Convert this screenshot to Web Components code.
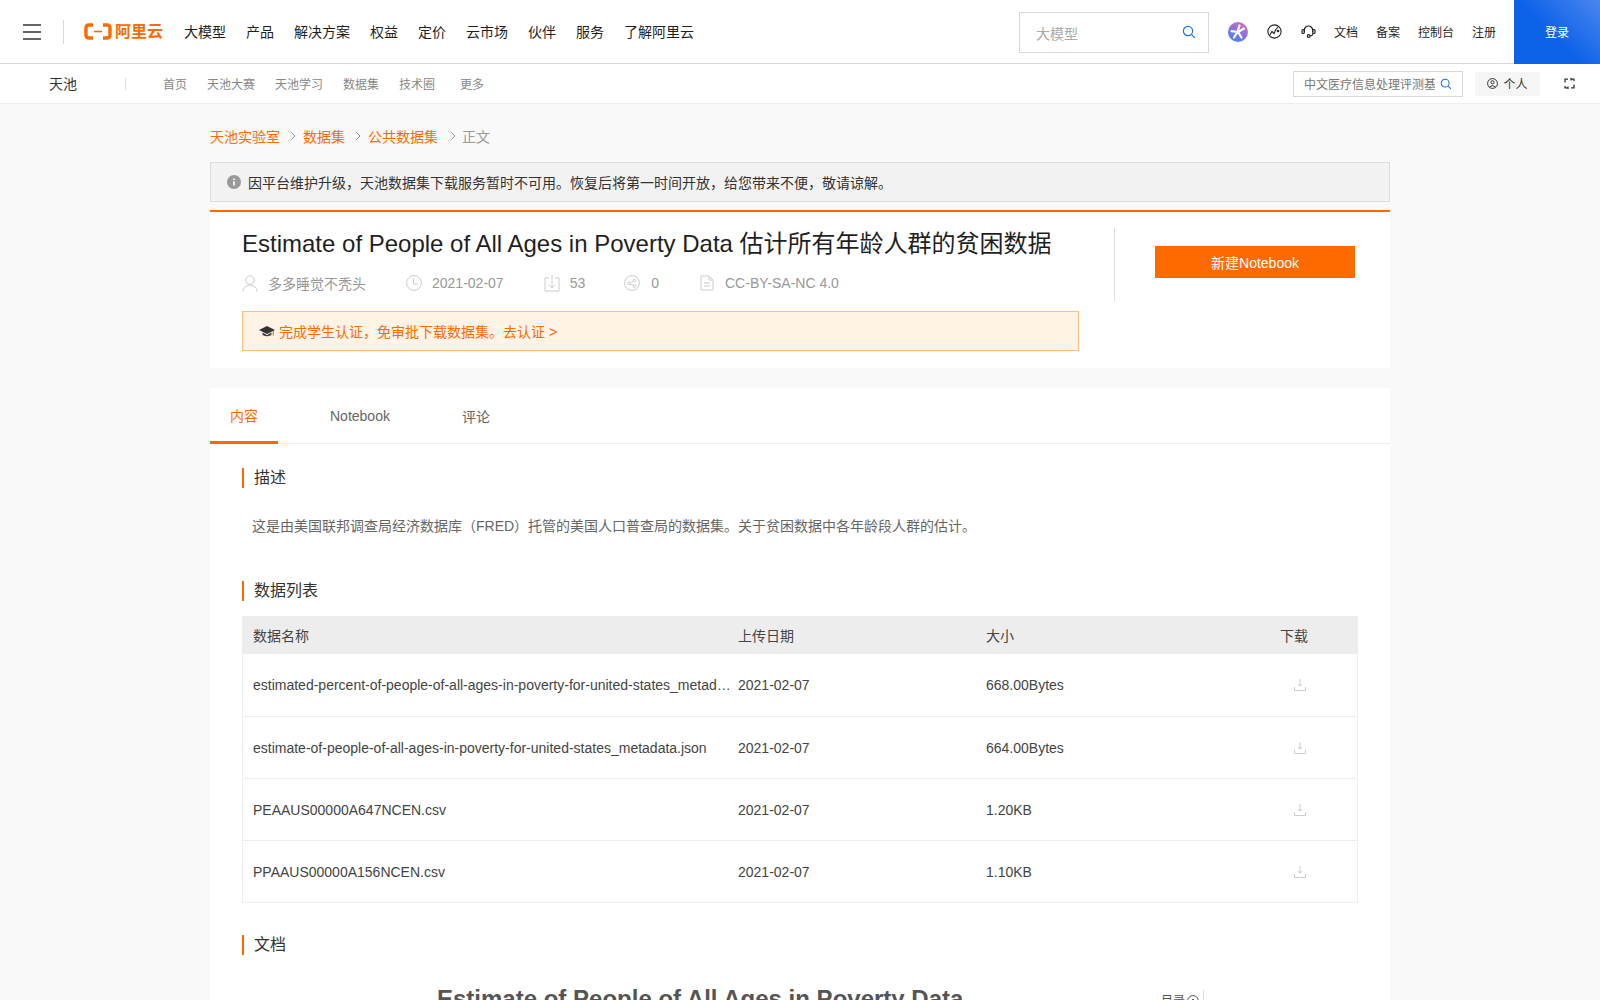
<!doctype html>
<html lang="zh">
<head>
<meta charset="UTF-8">
<title>Estimate of People of All Ages in Poverty Data</title>
<style>
    html, body { margin: 0; height: 1000px; overflow: hidden; }
    body {
        background: #f9f9f9;
        font-family: "Liberation Sans", "Noto Sans CJK SC", sans-serif;
        font-size: 14px;
        color: #333;
        text-spacing-trim: space-all;
    }
    main-column { margin: 0 auto; }
</style>
</head>
<body>
<top-bar></top-bar>
<sub-bar></sub-bar>
<main-column>
    <bread-crumb></bread-crumb>
    <notice-bar>因平台维护升级，天池数据集下载服务暂时不可用。恢复后将第一时间开放，给您带来不便，敬请谅解。</notice-bar>
    <dataset-head></dataset-head>
    <content-card>
        <tab-strip></tab-strip>
        <section-block heading="描述">
            <p style="margin:0;padding:0 0 0 10px;color:#666;font-size:14px;line-height:20px">这是由美国联邦调查局经济数据库（FRED）托管的美国人口普查局的数据集。关于贫困数据中各年龄段人群的估计。</p>
        </section-block>
        <file-table></file-table>
        <doc-view></doc-view>
    </content-card>
</main-column>
<script>
    const searchIcon = (size, color) => `<svg width="${size}" height="${size}" viewBox="0 0 14 14" fill="none" stroke="${color}" stroke-width="1.2"><circle cx="6" cy="6" r="4.6"/><path d="M9.4 9.4L12.8 12.8"/></svg>`;

    class TopBar extends HTMLElement {
        constructor() {
            super();
            const shadowRoot = this.attachShadow({mode: 'open'});
            const nav = ['大模型', '产品', '解决方案', '权益', '定价', '云市场', '伙伴', '服务', '了解阿里云'];
            shadowRoot.innerHTML = `
            <style>
                :host { display: flex; align-items: center; height: 63px; background: #fff; border-bottom: 1px solid #d9d9d9; color: #1f1f1f; }
                .burger { display: flex; flex-direction: column; justify-content: space-between; width: 18px; height: 16px; margin-left: 23px; }
                .burger i { display: block; height: 2px; background: #666; }
                .line { width: 1px; height: 24px; background: #d9d9d9; margin: 0 20px 0 22px; }
                .logo { display: flex; align-items: center; gap: 3px; color: #ff6a00; font-size: 16px; font-weight: 700; line-height: 18px; margin-right: 21px; }
                nav { display: flex; gap: 20px; font-size: 14px; padding-bottom: 2px; }
                .search { display: flex; align-items: center; justify-content: space-between; box-sizing: border-box; width: 190px; height: 41px; margin: 2px 0 0 auto; padding: 0 12px 0 16px; border: 1px solid #d9d9d9; color: #aaa; font-size: 14px; }
                .search svg { margin-top: -2px; }
                .tools { display: flex; align-items: center; font-size: 12px; margin-left: 19px; }
                .tools svg { display: block; }
                .login { display: flex; align-items: center; justify-content: center; box-sizing: border-box; width: 86px; height: 64px; padding-bottom: 2px; margin-bottom: -1px; margin-left: 18px; color: #fff; font-size: 12px; background: linear-gradient(45deg, #0e62e8 45%, #4a86ee); }
            </style>
            <div class="burger"><i></i><i></i><i></i></div>
            <div class="line"></div>
            <div class="logo">
                <svg width="28" height="17" viewBox="0 0 28 17" fill="none" stroke="#ff6a00"><path d="M9 2H5Q2 2 2 5V12Q2 15 5 15H9" stroke-width="3.4"/><path d="M19 2H23Q26 2 26 5V12Q26 15 23 15H19" stroke-width="3.4"/><path d="M10 8.5H18" stroke-width="1.6"/></svg>
                <span>阿里云</span>
            </div>
            <nav>${nav.map(n => `<span>${n}</span>`).join('')}</nav>
            <div class="search"><span>大模型</span>${searchIcon(14, '#1a6ff0')}</div>
            <div class="tools">
                <svg width="20" height="20" viewBox="0 0 20 20" style="margin-right:19px">
                    <defs><linearGradient id="ai" x1="0.8" y1="0" x2="0.2" y2="1"><stop offset="0" stop-color="#d66fb8"/><stop offset="0.5" stop-color="#8a70e0"/><stop offset="1" stop-color="#3f86f2"/></linearGradient></defs>
                    <circle cx="10" cy="10" r="10" fill="url(#ai)"/>
                    <path d="M11.5 3.5L9.8 9M3.5 9.2L9.5 10M9.5 10L6 15.5M10 10L13.5 15.5M10 10L16 6.5" stroke="#fff" stroke-width="2.2" stroke-linecap="round"/>
                </svg>
                <svg width="15" height="15" viewBox="0 0 15 15" fill="none" stroke="#222" stroke-width="1.1" style="margin-right:19px"><circle cx="7.5" cy="7.5" r="6.6"/><path d="M2.5 11.5L5 7.5L7 9.5L8.5 6L11 3"/><circle cx="11" cy="7" r="0.8"/></svg>
                <svg width="15" height="15" viewBox="0 0 15 15" fill="none" stroke="#222" stroke-width="1.2" style="margin-right:18px"><path d="M3.3 8V6.2a4.2 4.2 0 0 1 8.4 0V8"/><rect x="1" y="5.5" width="2.3" height="4" rx="1"/><rect x="11.7" y="5.5" width="2.3" height="4" rx="1"/><path d="M12 9.5Q11.5 12 9 12"/><circle cx="7.7" cy="12" r="1.4"/></svg>
                <span style="margin-right:18px">文档</span>
                <span style="margin-right:18px">备案</span>
                <span style="margin-right:18px">控制台</span>
                <span>注册</span>
            </div>
            <div class="login">登录</div>`;
        }
    }

    class SubBar extends HTMLElement {
        constructor() {
            super();
            const shadowRoot = this.attachShadow({mode: 'open'});
            shadowRoot.innerHTML = `
            <style>
                :host { display: flex; align-items: center; height: 39px; background: #fff; border-bottom: 1px solid #eee; }
                .name { margin-left: 49px; padding-bottom: 2px; font-size: 14px; color: #333; }
                .line { width: 1px; height: 12px; background: #ddd; margin: 0 37px 0 48px; }
                nav { display: flex; gap: 20px; font-size: 12px; color: #888; }
                .search { display: flex; align-items: center; box-sizing: border-box; width: 170px; height: 26px; margin-left: auto; padding: 0 10px; gap: 5px; border: 1px solid #d9d9d9; font-size: 12px; color: #777; white-space: nowrap; }
                .search span { overflow: hidden; flex: 1; }
                .mine { display: flex; align-items: center; justify-content: center; gap: 5px; width: 65px; height: 24px; margin-left: 12px; background: #f5f5f5; font-size: 12px; color: #333; }
                .swap { margin: 0 25px 0 24px; display: block; }
            </style>
            <span class="name">天池</span>
            <span class="line"></span>
            <nav><span>首页</span><span>天池大赛</span><span>天池学习</span><span>数据集</span><span>技术圈</span><span style="margin-left:5px">更多</span></nav>
            <div class="search"><span>中文医疗信息处理评测基准</span>${searchIcon(12, '#1a6ff0')}</div>
            <div class="mine">
                <svg width="11" height="11" viewBox="0 0 11 11" fill="none" stroke="#333"><circle cx="5.5" cy="5.5" r="4.9"/><circle cx="5.5" cy="4.3" r="1.6"/><path d="M2.6 9Q5.5 6 8.4 9"/></svg>
                <span>个人</span>
            </div>
            <svg class="swap" width="11" height="11" viewBox="0 0 11 11" fill="none" stroke="#333" stroke-width="1.3"><path d="M1 4.5V1.2H4M7.5 1.2H10V3M7 0V2.6"/><path d="M10 6.5V9.8H7M3.5 9.8H1V8M4 8.4V11"/></svg>`;
        }
    }

    class MainColumn extends HTMLElement {
        constructor() {
            super();
            const shadowRoot = this.attachShadow({mode: 'open'});
            shadowRoot.innerHTML = `<style>:host { display: block; width: 1180px; }</style><slot></slot>`;
        }
    }

    class BreadCrumb extends HTMLElement {
        constructor() {
            super();
            const shadowRoot = this.attachShadow({mode: 'open'});
            const arrow = (style = '') => `<svg style="${style}" width="6" height="10" viewBox="0 0 6 10" fill="none" stroke="#999"><path d="M1 1L5 5L1 9"/></svg>`;
            shadowRoot.innerHTML = `
            <style>
                :host { display: flex; align-items: center; box-sizing: border-box; height: 58px; padding-top: 5px; font-size: 14px; color: #ff6a00; }
                svg { margin: 1px 7px 0 10px; }
                .now { color: #999; margin-left: 1px; }
            </style>
            <span>天池实验室</span>${arrow()}<span>数据集</span>${arrow()}<span>公共数据集</span>${arrow('margin-left:12px;margin-right:5px')}<span class="now">正文</span>`;
        }
    }

    class NoticeBar extends HTMLElement {
        constructor() {
            super();
            const shadowRoot = this.attachShadow({mode: 'open'});
            shadowRoot.innerHTML = `
            <style>
                :host { display: flex; align-items: center; gap: 7px; box-sizing: border-box; height: 40px; padding-left: 16px; background: #f2f2f2; border: 1px solid #ddd; font-size: 14px; color: #333; }
            </style>
            <svg width="14" height="14" viewBox="0 0 14 14"><circle cx="7" cy="7" r="7" fill="#999"/><path d="M7 3.4V5M7 6.2V10.6" stroke="#fff" stroke-width="1.6"/></svg>
            <slot></slot>`;
        }
    }

    class DatasetHead extends HTMLElement {
        constructor() {
            super();
            const shadowRoot = this.attachShadow({mode: 'open'});
            const g = 'fill="none" stroke="#ccc" stroke-width="1"';
            shadowRoot.innerHTML = `
            <style>
                :host { display: flex; box-sizing: border-box; height: 158px; margin-top: 8px; padding-left: 32px; background: #fff; border-top: 2px solid #ff6a00; }
                .left { width: 837px; }
                h1 { margin: 16px 0 0; font-size: 24px; font-weight: 400; line-height: 32px; color: #1f1f1f; white-space: nowrap; }
                .meta { display: flex; align-items: center; gap: 40px; height: 20px; margin-top: 13px; font-size: 14px; color: #999; }
                .meta div { display: flex; align-items: center; gap: 10px; }
                .meta svg { display: block; }
                .student { display: flex; align-items: center; gap: 4px; box-sizing: border-box; height: 40px; margin-top: 18px; padding-left: 16px; background: #fff3e6; border: 1px solid #ffbf80; color: #ff6a00; font-size: 14px; }
                .right { display: flex; box-sizing: border-box; height: 73px; margin: 16px 0 0 35px; padding: 18px 0 0 40px; border-left: 1px solid #ddd; }
                .btn { display: flex; align-items: center; justify-content: center; width: 200px; height: 32px; background: #ff6a00; color: #fff; font-size: 14px; }
            </style>
            <div class="left">
                <h1>Estimate of People of All Ages in Poverty Data 估计所有年龄人群的贫困数据</h1>
                <div class="meta">
                    <div><svg width="16" height="18" viewBox="0 0 16 18" ${g}><circle cx="8" cy="6" r="4.2"/><path d="M0.8 17.5Q2 11 8 11Q14 11 15.2 17.5"/></svg><span>多多睡觉不秃头</span></div>
                    <div><svg width="16" height="16" viewBox="0 0 16 16" ${g}><circle cx="8" cy="8" r="7.4"/><path d="M7.5 3.5V9H12"/></svg><span>2021-02-07</span></div>
                    <div style="margin-right:-1px"><svg width="16" height="18" viewBox="0 0 16 18" ${g}><path d="M5 4H1V17H15V4H11"/><path d="M8 1V14M4.5 10.5L8 14L11.5 10.5"/></svg><span>53</span></div>
                    <div style="gap:11px"><svg width="16" height="16" viewBox="0 0 16 16" ${g}><circle cx="8" cy="8" r="7.4"/><circle cx="5" cy="8.5" r="1.4"/><circle cx="10.5" cy="5.5" r="1.4"/><circle cx="10.5" cy="11" r="1.4"/><path d="M6.2 7.8L9.3 6.2M6.2 9.2L9.3 10.4"/></svg><span>0</span></div>
                    <div style="margin-left:1px;gap:11px"><svg width="14" height="16" viewBox="0 0 14 16" ${g}><path d="M1 1H9L13 5V15H1Z"/><path d="M9 1V5H13M4 8H10M4 11H10"/></svg><span>CC-BY-SA-NC 4.0</span></div>
                </div>
                <div class="student">
                    <svg width="16" height="16" viewBox="0 0 16 16"><path d="M8 3L16 7L8 11L0 7Z" fill="#333"/><path d="M3.5 9.5V12Q8 14.5 12.5 12V9.5L8 12Z" fill="#444"/><path d="M14.3 8V12.5" stroke="#c98a1a" stroke-width="1.2"/></svg>
                    <span>完成学生认证，免审批下载数据集。去认证 &gt;</span>
                </div>
            </div>
            <div class="right"><div class="btn">新建Notebook</div></div>`;
        }
    }

    class ContentCard extends HTMLElement {
        constructor() {
            super();
            const shadowRoot = this.attachShadow({mode: 'open'});
            shadowRoot.innerHTML = `<style>:host { display: block; height: 640px; margin-top: 20px; background: #fff; overflow: hidden; }</style><slot></slot>`;
        }
    }

    class TabStrip extends HTMLElement {
        constructor() {
            super();
            const shadowRoot = this.attachShadow({mode: 'open'});
            shadowRoot.innerHTML = `
            <style>
                :host { display: flex; height: 56px; border-bottom: 1px solid #eee; box-sizing: border-box; font-size: 14px; color: #666; }
                span { display: flex; align-items: center; justify-content: center; box-sizing: border-box; height: 56px; padding: 0 20px; margin-right: 32px; }
                span:last-child { margin-right: 0; }
                .on { color: #ff6a00; border-bottom: 3px solid #ff6a00; }
            </style>
            <span class="on">内容</span><span>Notebook</span><span>评论</span>`;
        }
    }

    class SectionBlock extends HTMLElement {
        constructor() {
            super();
            const shadowRoot = this.attachShadow({mode: 'open'});
            shadowRoot.innerHTML = `
            <style>
                :host { display: block; padding: 24px 32px 0; }
                h3 { margin: 0 0 28px; padding-left: 10px; border-left: 2px solid #ff6a00; font-size: 16px; font-weight: 400; line-height: 20px; height: 20px; color: #333; }
            </style>
            <h3>${this.getAttribute('heading')}</h3>
            <slot></slot>`;
        }
    }

    class FileTable extends HTMLElement {
        constructor() {
            super();
            const shadowRoot = this.attachShadow({mode: 'open'});
            const rows = [
                ['estimated-percent-of-people-of-all-ages-in-poverty-for-united-states_metadata.json', '668.00Bytes'],
                ['estimate-of-people-of-all-ages-in-poverty-for-united-states_metadata.json', '664.00Bytes'],
                ['PEAAUS00000A647NCEN.csv', '1.20KB'],
                ['PPAAUS00000A156NCEN.csv', '1.10KB']
            ];
            const icon = `<svg width="14" height="14" viewBox="0 0 14 14" fill="none" stroke="#ccc"><path d="M7 1V8M4.8 6L7 8.2L9.2 6" /><path d="M1.5 9V12.5H12.5V9"/></svg>`;
            shadowRoot.innerHTML = `
            <style>
                :host { display: block; padding: 45px 32px 0; }
                h3 { margin: 0 0 15px; padding-left: 10px; border-left: 2px solid #ff6a00; font-size: 16px; font-weight: 400; line-height: 20px; height: 20px; color: #333; }
                .table { border: 1px solid #eee; border-top: 0; }
                .row { display: grid; grid-template-columns: 485px 248px 256px 1fr; align-items: center; box-sizing: border-box; height: 62px; padding-left: 10px; border-top: 1px solid #eee; font-size: 14px; color: #444; }
                .row:first-child { height: 38px; background: #ededed; border-top: 0; margin: 0 -1px; padding-left: 11px; color: #444; }
                .row:nth-child(2) { border-top: 0; }
                .row .name { overflow: hidden; text-overflow: ellipsis; white-space: nowrap; padding-right: 6px; }
                .dl { display: flex; justify-content: flex-start; margin-left: 51px; }
                .dl svg { display: block; }
                .hd { margin-left: 38px; }
            </style>
            <h3>数据列表</h3>
            <div class="table">
                <div class="row"><span>数据名称</span><span>上传日期</span><span>大小</span><span class="hd">下载</span></div>
                ${rows.map(r => `<div class="row"><span class="name">${r[0]}</span><span>2021-02-07</span><span>${r[1]}</span><span class="dl">${icon}</span></div>`).join('')}
            </div>`;
        }
    }

    class DocView extends HTMLElement {
        constructor() {
            super();
            const shadowRoot = this.attachShadow({mode: 'open'});
            shadowRoot.innerHTML = `
            <style>
                :host { display: block; padding: 32px 32px 0; }
                h3 { margin: 0; padding-left: 10px; border-left: 2px solid #ff6a00; font-size: 16px; font-weight: 400; line-height: 20px; height: 20px; color: #333; }
                .doc { display: flex; margin-top: 28px; }
                h1 { margin: 0 0 0 195px; font-size: 24px; font-weight: 700; line-height: 32px; color: #555; white-space: nowrap; }
                .toc { display: flex; align-items: flex-start; gap: 2px; align-self: flex-start; box-sizing: border-box; height: 28px; margin: 7px 154px 0 auto; padding: 4px 4px 0 0; border-right: 1px solid #ddd; font-size: 12px; line-height: 14px; color: #555; }
                .toc svg { margin-top: 1px; }
            </style>
            <h3>文档</h3>
            <div class="doc">
                <h1>Estimate of People of All Ages in Poverty Data</h1>
                <div class="toc"><span>目录</span><svg width="12" height="12" viewBox="0 0 12 12" fill="none" stroke="#555"><circle cx="6" cy="6" r="5.4"/><path d="M3.5 7L6 4L8.5 7"/></svg></div>
            </div>`;
        }
    }

    customElements.define('top-bar', TopBar);
    customElements.define('sub-bar', SubBar);
    customElements.define('main-column', MainColumn);
    customElements.define('bread-crumb', BreadCrumb);
    customElements.define('notice-bar', NoticeBar);
    customElements.define('dataset-head', DatasetHead);
    customElements.define('content-card', ContentCard);
    customElements.define('tab-strip', TabStrip);
    customElements.define('section-block', SectionBlock);
    customElements.define('file-table', FileTable);
    customElements.define('doc-view', DocView);
</script>
</body>
</html>
